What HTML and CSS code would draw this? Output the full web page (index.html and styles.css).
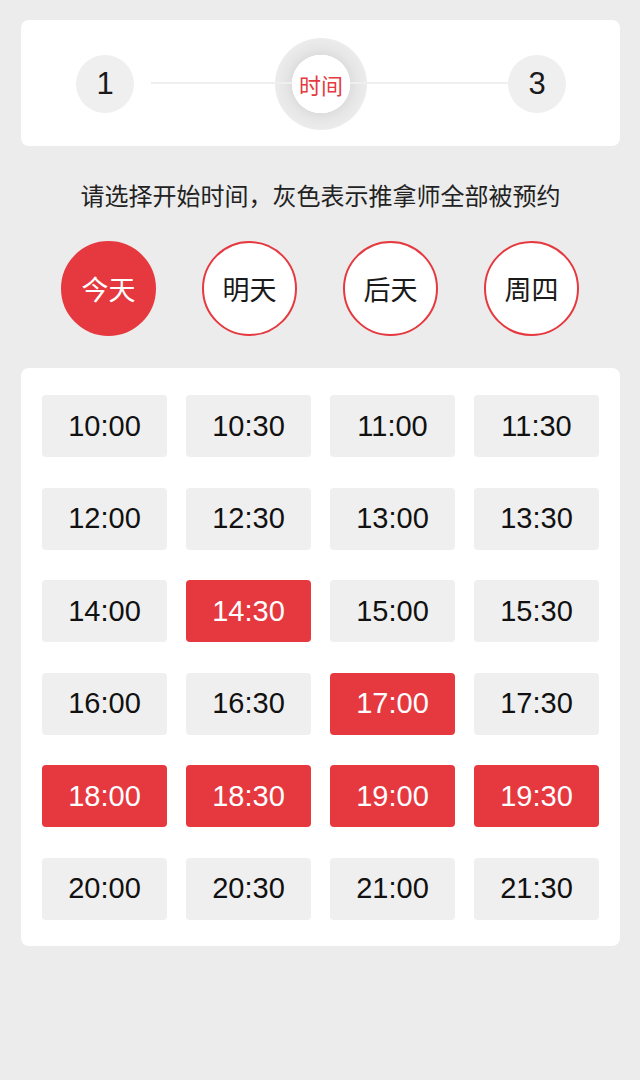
FILE: index.html
```html
<!DOCTYPE html>
<html lang="zh-CN">
<head>
<meta charset="utf-8">
<title>选择时间</title>
<link rel="stylesheet" href="styles.css">
</head>
<body>
<div class="page">
  <section class="steps">
    <div class="step-line"></div>
    <div class="step">1</div>
    <div class="step-current"><div class="step-inner">时间</div></div>
    <div class="step">3</div>
  </section>

  <p class="tip">请选择开始时间，灰色表示推拿师全部被预约</p>

  <div class="days">
    <div class="day active">今天</div>
    <div class="day">明天</div>
    <div class="day">后天</div>
    <div class="day">周四</div>
  </div>

  <section class="slots">
    <div class="slot">10:00</div>
    <div class="slot">10:30</div>
    <div class="slot">11:00</div>
    <div class="slot">11:30</div>
    <div class="slot">12:00</div>
    <div class="slot">12:30</div>
    <div class="slot">13:00</div>
    <div class="slot">13:30</div>
    <div class="slot">14:00</div>
    <div class="slot selected">14:30</div>
    <div class="slot">15:00</div>
    <div class="slot">15:30</div>
    <div class="slot">16:00</div>
    <div class="slot">16:30</div>
    <div class="slot selected">17:00</div>
    <div class="slot">17:30</div>
    <div class="slot selected">18:00</div>
    <div class="slot selected">18:30</div>
    <div class="slot selected">19:00</div>
    <div class="slot selected">19:30</div>
    <div class="slot">20:00</div>
    <div class="slot">20:30</div>
    <div class="slot">21:00</div>
    <div class="slot">21:30</div>
  </section>
</div>
</body>
</html>
```

FILE: styles.css
```css
html, body {
  margin: 0;
  padding: 0;
  background: #ececec;
}

body {
  font-family: "Liberation Sans", "Noto Sans CJK SC", sans-serif;
  color: #111;
}

.page {
  width: 599px;
  padding: 20px 20px 0 21px;
}

.steps {
  position: relative;
  height: 126px;
  background: #fff;
  border-radius: 8px;
  display: flex;
  align-items: center;
  justify-content: space-between;
  padding: 1px 54px 0 55px;
  box-sizing: border-box;
}

.step-line {
  position: absolute;
  left: 130px;
  right: 110px;
  top: 62px;
  height: 2px;
  background: #efefef;
  z-index: 1;
}

.step {
  width: 58px;
  height: 58px;
  border-radius: 50%;
  background: #efefef;
  display: flex;
  align-items: center;
  justify-content: center;
  font-size: 31px;
  color: #1a1a1a;
  position: relative;
  z-index: 2;
}

.step-current {
  width: 92px;
  height: 92px;
  border-radius: 50%;
  background: radial-gradient(circle, #fff 0 29px, #dedede 29.5px, #e6e6e6 36px, #ececec 46px);
  display: flex;
  align-items: center;
  justify-content: center;
}

.step-inner {
  position: relative;
  z-index: 2;
  width: 58px;
  height: 58px;
  border-radius: 50%;
  background: #fff;
  display: flex;
  align-items: center;
  justify-content: center;
  font-family: "Noto Sans CJK SC", sans-serif;
  font-size: 22px;
  color: #e6393f;
}

.tip {
  margin: 32px 0 0 0;
  line-height: 34px;
  font-family: "Noto Sans CJK SC", sans-serif;
  font-size: 24px;
  color: #222;
  text-align: center;
}

.days {
  margin-top: 29px;
  display: flex;
  justify-content: center;
  gap: 46px;
  margin-left: -21px;
  margin-right: -20px;
}

.day {
  width: 95px;
  height: 95px;
  box-sizing: border-box;
  border-radius: 50%;
  border: 2px solid #e6393f;
  background: #fff;
  display: flex;
  align-items: center;
  justify-content: center;
  font-family: "Noto Sans CJK SC", sans-serif;
  font-size: 27px;
  color: #1a1a1a;
}

.day.active {
  background: #e6393f;
  color: #fff;
}

.slots {
  margin-top: 32px;
  background: #fff;
  border-radius: 8px;
  padding: 27px 21px 26px 21px;
  display: grid;
  grid-template-columns: repeat(4, 125px);
  column-gap: 19px;
  row-gap: 30.5px;
}

.slot {
  height: 62px;
  border-radius: 4px;
  background: #efefef;
  display: flex;
  align-items: center;
  justify-content: center;
  font-size: 29px;
  color: #111;
}

.slot.selected {
  background: #e6393f;
  color: #fff;
}
```
